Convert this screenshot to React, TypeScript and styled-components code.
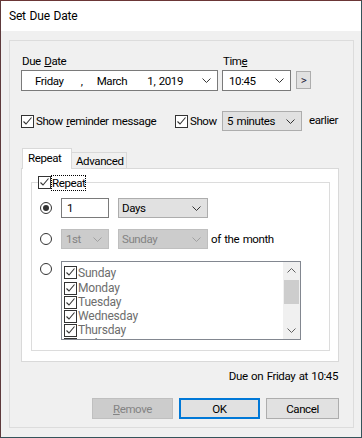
import { type FC, type ReactNode } from "react";
import styled, { createGlobalStyle } from "styled-components";

const GlobalStyle = createGlobalStyle`
    body {
        margin: 0;
        font-family: Roboto, "Noto Sans", sans-serif;
        font-size: 11.5px;
        letter-spacing: -0.4px;
        word-spacing: 1px;
        color: #000;
    }
    * { box-sizing: border-box; }
`;

const days = ["Sunday", "Monday", "Tuesday", "Wednesday", "Thursday", "Friday", "Saturday"];

const Chevron: FC<{ up?: boolean; color?: string }> = ({ up, color = "#333" }) => (
    <svg width="9" height="5" viewBox="0 0 9 5">
        <path d={up ? "M0.5 4.5 L4.5 0.5 L8.5 4.5" : "M0.5 0.5 L4.5 4.5 L8.5 0.5"} fill="none" stroke={color} strokeWidth="1" />
    </svg>
);

const CheckBox: FC = () => (
    <Box>
        <svg width="11" height="11" viewBox="0 0 11 11">
            <path d="M1.5 5.5 L4 8 L9.5 1.5" fill="none" stroke="#333" strokeWidth="1.1" />
        </svg>
    </Box>
);

const Select: FC<{ children: ReactNode; width: number; pad: number; kind?: "edit" | "list" | "off" }> = ({ children, width, pad, kind = "list" }) => (
    <Combo $width={width} $pad={pad} $kind={kind}>
        <ComboText>{children}</ComboText>
        <Chevron color={kind === "off" ? "#a0a0a0" : "#333"} />
    </Combo>
);

const App: FC = () => {
    return (
        <>
            <GlobalStyle />
            <Window>
                <TitleBar>Set Due Date</TitleBar>
                <Body>
                    <Panel>
                        <TopRow>
                            <Field>
                                <Label>Due <u>D</u>ate</Label>
                                <Combo $width={197} $pad={13} $kind="edit">
                                    <DatePart $w={46}>Friday</DatePart>
                                    <DatePart $w={16}>,</DatePart>
                                    <DatePart $w={51}>March</DatePart>
                                    <DatePart $w={55}>1, 2019</DatePart>
                                    <Chevron />
                                </Combo>
                            </Field>
                            <Field $gap={4}>
                                <Label>Tim<u>e</u></Label>
                                <Select width={69} pad={6} kind="edit">10:45</Select>
                            </Field>
                            <SmallButton>&gt;</SmallButton>
                        </TopRow>

                        <OptionRow>
                            <CheckItem $width={154}>
                                <CheckBox />
                                <span>Show <u>r</u>eminder message</span>
                            </CheckItem>
                            <CheckItem $width={47}>
                                <CheckBox />
                                <span>Show</span>
                            </CheckItem>
                            <Select width={80} pad={4}>5 minutes</Select>
                            <Earlier>earlier</Earlier>
                        </OptionRow>

                        <Tabs>
                            <TabStrip>
                                <Tab $active>Repeat</Tab>
                                <Tab>Advanced</Tab>
                            </TabStrip>
                            <TabPanel>
                                <Group>
                                    <Legend>
                                        <CheckBox />
                                        <FocusText>Repeat</FocusText>
                                    </Legend>
                                    <RepeatRow>
                                        <Radio $on />
                                        <TextBox>1</TextBox>
                                        <Select width={90} pad={3}>Days</Select>
                                    </RepeatRow>
                                    <RepeatRow $top={11}>
                                        <Radio />
                                        <Select width={48} pad={4} kind="off">1st</Select>
                                        <Select width={90} pad={3} kind="off">Sunday</Select>
                                        <MonthText>of the month</MonthText>
                                    </RepeatRow>
                                    <RepeatRow $top={12} $alignTop>
                                        <Radio $offset={2} />
                                        <ListBox>
                                            <ListItems>
                                                {days.map((d) => (
                                                    <ListItem key={d}>
                                                        <CheckBox />
                                                        <span>{d}</span>
                                                    </ListItem>
                                                ))}
                                            </ListItems>
                                            <ScrollBar>
                                                <ScrollArrow><Chevron up color="#606060" /></ScrollArrow>
                                                <Thumb />
                                                <ScrollArrow><Chevron color="#606060" /></ScrollArrow>
                                            </ScrollBar>
                                        </ListBox>
                                    </RepeatRow>
                                </Group>
                            </TabPanel>
                        </Tabs>

                        <DueText>Due on Friday at 10:45</DueText>

                        <ButtonRow>
                            <Button $width={81} $kind="off"><u>R</u>emove</Button>
                            <Button $width={81} $kind="default">OK</Button>
                            <Button $width={73}>Cancel</Button>
                        </ButtonRow>
                    </Panel>
                </Body>
            </Window>
        </>
    );
};

export default App;

const Window = styled.div`
    width: 362px;
    height: 438px;
    display: flex;
    flex-direction: column;
    background: #f0f0f0;
    border: 1px solid #34535a;
    border-left-color: #5e3a3c;
    border-top-color: #6b3636;
`;

const TitleBar = styled.div`
    height: 30px;
    line-height: 30px;
    padding-left: 8px;
    background: #fff;
    font-size: 12px;
    letter-spacing: -0.2px;
`;

const Body = styled.div`
    flex: 1;
    display: flex;
    padding: 9px 7px 9px 8px;
`;

const Panel = styled.div`
    flex: 1;
    display: flex;
    flex-direction: column;
    border: 1px solid #dcdcdc;
    padding: 13px 13px 7px 11px;
`;

const TopRow = styled.div`
    display: flex;
    align-items: flex-end;
`;

const Field = styled.div<{ $gap?: number }>`
    display: flex;
    flex-direction: column;
    gap: 1px;
    margin-left: ${(p) => p.$gap ?? 0}px;
`;

const Label = styled.div`
    height: 15px;
    line-height: 15px;
    padding-left: 1px;
`;

const Combo = styled.div<{ $width: number; $pad: number; $kind: "edit" | "list" | "off" }>`
    width: ${(p) => p.$width}px;
    height: ${(p) => (p.$kind === "edit" ? 21 : 20)}px;
    display: flex;
    align-items: center;
    padding: 0 6px 0 ${(p) => p.$pad}px;
    background: ${(p) => (p.$kind === "edit" ? "#fff" : p.$kind === "off" ? "#cccccc" : "#e1e1e1")};
    border: 1px solid ${(p) => (p.$kind === "edit" ? "#7a7a7a" : p.$kind === "off" ? "#bfbfbf" : "#adadad")};
    color: ${(p) => (p.$kind === "off" ? "#838383" : "#000")};
    flex-shrink: 0;
`;

const ComboText = styled.span`
    flex: 1;
    white-space: nowrap;
`;

const DatePart = styled.span<{ $w: number }>`
    width: ${(p) => p.$w}px;
    white-space: pre;
`;

const SmallButton = styled.div`
    width: 15px;
    height: 18px;
    margin: 0 0 2px 5px;
    display: flex;
    align-items: center;
    justify-content: center;
    background: #e1e1e1;
    border: 1px solid #adadad;
    color: #1c1c3c;
`;

const OptionRow = styled.div`
    margin-top: 20px;
    height: 20px;
    display: flex;
    align-items: center;
`;

const CheckItem = styled.div<{ $width: number }>`
    width: ${(p) => p.$width}px;
    display: flex;
    align-items: center;
    gap: 2px;
    white-space: nowrap;
`;

const Box = styled.span`
    width: 13px;
    height: 13px;
    flex-shrink: 0;
    display: flex;
    align-items: center;
    justify-content: center;
    background: #fff;
    border: 1px solid #333;
`;

const Earlier = styled.span`
    margin: -3px 0 0 7px;
`;

const Tabs = styled.div`
    margin-top: 17px;
    display: flex;
    flex-direction: column;
`;

const TabStrip = styled.div`
    height: 20px;
    display: flex;
    align-items: flex-end;
    padding-left: 1px;
`;

const Tab = styled.div<{ $active?: boolean }>`
    position: relative;
    z-index: 1;
    height: ${(p) => (p.$active ? 21 : 16)}px;
    margin-bottom: ${(p) => (p.$active ? -1 : 0)}px;
    padding: ${(p) => (p.$active ? "2px 5px 0" : "0 4px")};
    line-height: ${(p) => (p.$active ? 15 : 16)}px;
    background: ${(p) => (p.$active ? "#fff" : "#f0f0f0")};
    border: 1px solid #d9d9d9;
    border-bottom: none;
    border-left: ${(p) => (p.$active ? "1px solid #d9d9d9" : "none")};
    width: ${(p) => (p.$active ? 50 : 55)}px;
`;

const TabPanel = styled.div`
    width: 318px;
    height: 194px;
    background: #fff;
    border: 1px solid #d9d9d9;
    padding-top: 7px;
`;

const Group = styled.fieldset`
    margin: 0 8px 0 9px;
    height: 175px;
    padding: 9px 8px 9px 8px;
    border: 1px solid #dcdcdc;
    display: flex;
    flex-direction: column;
`;

const Legend = styled.legend`
    margin-left: -2px;
    padding: 0;
    height: 13px;
    line-height: 13px;
    display: flex;
    align-items: center;
    gap: 1px;
`;

const FocusText = styled.span`
    outline: 1px dotted #000;
    outline-offset: 0;
    line-height: 14px;
`;

const RepeatRow = styled.div<{ $top?: number; $alignTop?: boolean }>`
    margin-top: ${(p) => p.$top ?? 0}px;
    display: flex;
    align-items: ${(p) => (p.$alignTop ? "flex-start" : "center")};
    gap: 9px;
`;

const Radio = styled.span<{ $on?: boolean; $offset?: number }>`
    width: 12px;
    height: 12px;
    margin-top: ${(p) => p.$offset ?? 0}px;
    border-radius: 50%;
    border: 1px solid #333;
    background: #fff;
    flex-shrink: 0;
    display: flex;
    align-items: center;
    justify-content: center;
    &::after {
        content: "";
        display: ${(p) => (p.$on ? "block" : "none")};
        width: 6px;
        height: 6px;
        border-radius: 50%;
        background: #333;
    }
`;

const TextBox = styled.div`
    width: 48px;
    height: 20px;
    line-height: 18px;
    padding-left: 5px;
    border: 1px solid #7a7a7a;
    background: #fff;
`;

const MonthText = styled.span`
    margin-left: -6px;
`;

const ListBox = styled.div`
    width: 240px;
    height: 79px;
    display: flex;
    border: 1px solid #828790;
    background: #fff;
`;

const ListItems = styled.div`
    flex: 1;
    overflow: hidden;
    padding: 4px 0 0 2px;
    color: #6d6d6d;
    font-size: 12px;
    letter-spacing: -0.2px;
`;

const ListItem = styled.div`
    height: 14px;
    display: flex;
    align-items: center;
    gap: 1px;
    &:first-child { height: 15px; align-items: flex-start; }
`;

const ScrollBar = styled.div`
    width: 17px;
    display: flex;
    flex-direction: column;
    align-items: center;
    background: #f0f0f0;
`;

const ScrollArrow = styled.div`
    width: 17px;
    height: 17px;
    display: flex;
    align-items: center;
    justify-content: center;
    &:last-child { margin-top: auto; }
`;

const Thumb = styled.div`
    width: 15px;
    height: 24px;
    margin-top: 1px;
    background: #cdcdcd;
`;

const DueText = styled.div`
    margin: 7px 2px 0 0;
    text-align: right;
    line-height: 15px;
`;

const ButtonRow = styled.div`
    margin: 14px 1px 0 0;
    display: flex;
    justify-content: flex-end;
    gap: 6px;
`;

const Button = styled.div<{ $width: number; $kind?: "off" | "default" }>`
    width: ${(p) => p.$width}px;
    height: 21px;
    display: flex;
    align-items: center;
    justify-content: center;
    background: ${(p) => (p.$kind === "off" ? "#cccccc" : "#e1e1e1")};
    border: ${(p) => (p.$kind === "default" ? "2px solid #0078d7" : p.$kind === "off" ? "1px solid #bfbfbf" : "1px solid #adadad")};
    color: ${(p) => (p.$kind === "off" ? "#838383" : "#000")};
`;
